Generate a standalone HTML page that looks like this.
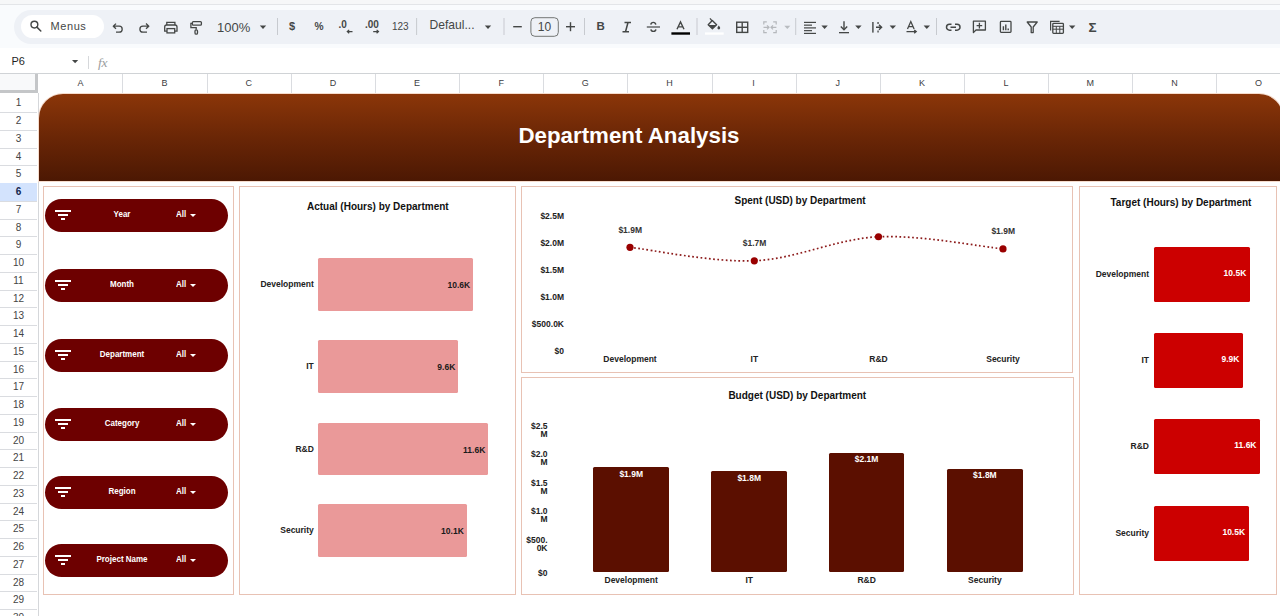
<!DOCTYPE html>
<html><head><meta charset="utf-8"><style>*{box-sizing:border-box;margin:0;padding:0}
html,body{width:1280px;height:616px;overflow:hidden;background:#fff;font-family:"Liberation Sans",sans-serif;position:relative}
.a{position:absolute}
#topstrip{left:0;top:0;width:1280px;height:5px;background:#f6f7f8;border-bottom:1px solid #e3e5e8}
#chrome{left:0;top:5px;width:1280px;height:43px;background:#f9fbfd}
#tb{left:14px;top:10px;width:1300px;height:34px;background:#eef1f6;border-radius:17px}
#search{left:21px;top:15px;width:83px;height:23px;background:#fff;border-radius:12px}
.tt{color:#444746;font-size:12px;white-space:nowrap;line-height:1.15}
svg.ic{position:absolute;overflow:visible}
#fbar{left:0;top:48px;width:1280px;height:25px;background:#fff}
.colL{text-align:center;font-size:9px;line-height:19px;color:#3c4043}
.rowL{text-align:center;font-size:10px;color:#444}
#banner{left:39px;top:94px;width:1244px;height:86.5px;border-radius:24px 24px 0 0;background:linear-gradient(#8b3609,#6a2606 50%,#4c1803);box-shadow:0 0 0 1px #f6dccd}
#title{left:39px;top:122.5px;width:1180px;text-align:center;color:#fff;font-weight:700;font-size:22.3px;line-height:26px}
.panel{position:absolute;background:#fff;border:1.6px solid #e8c2b4}
.slicer{position:absolute;left:45px;width:183.3px;height:33px;border-radius:17px;background:#6d0000}
.sl-t{position:absolute;top:-1.1px;transform:scaleY(1.12);left:0;width:154px;line-height:33px;text-align:center;color:#fff;font-weight:700;font-size:8px}
.sl-all{position:absolute;left:131px;top:-1.1px;transform:scaleY(1.12);line-height:33px;color:#fff;font-weight:700;font-size:8px}
.sl-arr{position:absolute;left:145px;top:15px;width:0;height:0;border-left:3px solid transparent;border-right:3px solid transparent;border-top:3px solid #fff}
.fl1{position:absolute;left:10px;top:10.5px;width:16px;height:2px;background:#fff}
.fl2{position:absolute;left:13px;top:14.8px;width:10px;height:2px;background:#fff}
.fl3{position:absolute;left:16px;top:19px;width:4px;height:2px;background:#fff}
.ctitle{position:absolute;font-weight:700;font-size:10px;line-height:12px;color:#111;white-space:nowrap}
.lbl{position:absolute;font-weight:700;font-size:8.5px;line-height:10px;color:#222;white-space:nowrap}
.bar1{background:#ea9999;border-radius:1.5px}
.bar2{background:#cc0000;border-radius:1.5px}
.bar3{background:#5b0f00;border-radius:1.5px}
</style></head><body>
<div class="a" id="topstrip"></div>
<div class="a" id="chrome"></div>
<div class="a" id="tb"></div>
<div class="a" id="search"></div>
<svg class="ic" style="left:0;top:0" width="1280" height="48" viewBox="0 0 1280 48"><circle cx="34.4" cy="24.6" r="3.4" fill="none" stroke="#444746" stroke-width="1.4"/><line x1="36.9" y1="27.1" x2="40.8" y2="31" stroke="#444746" stroke-width="1.5" stroke-linecap="round"/><path d="M116,23.6 L113.3,26.2 L116,28.8 M113.6,26.2 H119.2 A3,2.95 0 0 1 119.2,32.1 H116" fill="none" stroke="#444746" stroke-width="1.3" stroke-linejoin="round"/><path d="M146,23.6 L148.8,26.2 L146,28.8 M148.5,26.2 H142.9 A3,2.95 0 0 0 142.9,32.1 H147" fill="none" stroke="#444746" stroke-width="1.3" stroke-linejoin="round"/><path d="M166.8,25 V22.4 H174.9 V25" fill="none" stroke="#444746" stroke-width="1.3"/><path d="M167,31.2 H164.7 V27 Q164.7,25 166.7,25 H175 Q177,25 177,27 V31.2 H174.7" fill="none" stroke="#444746" stroke-width="1.3"/><rect x="167" y="28.6" width="7.7" height="4.3" fill="none" stroke="#444746" stroke-width="1.3"/><rect x="192.4" y="21.6" width="9" height="3.6" rx="1" fill="none" stroke="#444746" stroke-width="1.3"/><path d="M192.4,23.4 H190.9 V27.6 H196.2 V29.6" fill="none" stroke="#444746" stroke-width="1.3"/><rect x="195" y="29.8" width="2.5" height="4.4" rx="1.2" fill="none" stroke="#444746" stroke-width="1.3"/><path d="M259.8,25.6 H266.2 L263,29 Z" fill="#444746"/><path d="M484.8,25.6 H491.2 L488,29 Z" fill="#444746"/><path d="M821.4,25.6 H827.8000000000001 L824.6,29 Z" fill="#444746"/><path d="M855.1999999999999,25.6 H861.6 L858.4,29 Z" fill="#444746"/><path d="M889.5999999999999,25.6 H896.0 L892.8,29 Z" fill="#444746"/><path d="M923.5999999999999,25.6 H930.0 L926.8,29 Z" fill="#444746"/><path d="M1069.0,25.6 H1075.4 L1072.2,29 Z" fill="#444746"/><path d="M784.3,25.8 H790.3 L787.3,29 Z" fill="#b8bcc0"/><rect x="277.0" y="18" width="1" height="17" fill="#c7cacf"/><rect x="416.1" y="18" width="1" height="17" fill="#c7cacf"/><rect x="503.5" y="18" width="1" height="17" fill="#c7cacf"/><rect x="584.0" y="18" width="1" height="17" fill="#c7cacf"/><rect x="696.5" y="18" width="1" height="17" fill="#c7cacf"/><rect x="795.2" y="18" width="1" height="17" fill="#c7cacf"/><rect x="936.0" y="18" width="1" height="17" fill="#c7cacf"/><line x1="513.2" y1="26.7" x2="521.8" y2="26.7" stroke="#444746" stroke-width="1.4"/><line x1="566" y1="26.7" x2="575" y2="26.7" stroke="#444746" stroke-width="1.4"/><line x1="570.5" y1="22.2" x2="570.5" y2="31.2" stroke="#444746" stroke-width="1.4"/><rect x="530.9" y="17.7" width="27.4" height="18.6" rx="4" fill="none" stroke="#747775" stroke-width="1"/><path d="M624.5,22.5 H631 M622.5,31.7 H629 M628,22.5 L625.5,31.7" fill="none" stroke="#444746" stroke-width="1.5"/><line x1="646.8" y1="27" x2="660" y2="27" stroke="#444746" stroke-width="1.2"/><path d="M655.8,24.6 Q655.4,22.4 653.3,22.4 Q651.1,22.4 650.8,24.6" fill="none" stroke="#444746" stroke-width="1.4"/><path d="M650.9,29.4 Q651.2,31.4 653.4,31.4 Q655.6,31.4 655.9,29.4" fill="none" stroke="#444746" stroke-width="1.4"/><path d="M677,29.2 L680.5,21.9 L684,29.2 M678.1,26.9 H682.9" fill="none" stroke="#444746" stroke-width="1.4"/><rect x="671.4" y="32.3" width="18.6" height="2.4" fill="#000"/><path d="M710,18.4 L712,20.8" stroke="#444746" stroke-width="1.3"/><path d="M712.3,20.6 L716.6,24.7 L712.4,28.8 L708.2,24.7 Z" fill="none" stroke="#444746" stroke-width="1.4" stroke-linejoin="round"/><path d="M708.6,24.9 L716.2,24.9 L712.4,28.6 Z" fill="#444746"/><path d="M718.8,25.6 Q720.2,27.4 720.2,28 A1.4,1.4 0 0 1 717.4,28 Q717.4,27.4 718.8,25.6Z" fill="#444746"/><rect x="705" y="32.4" width="18.7" height="2.3" fill="#ffffff"/><rect x="736.7" y="22.2" width="11" height="10.2" fill="none" stroke="#444746" stroke-width="1.4"/><line x1="742.2" y1="22.2" x2="742.2" y2="32.4" stroke="#444746" stroke-width="1.4"/><line x1="736.7" y1="27.3" x2="747.7" y2="27.3" stroke="#444746" stroke-width="1.4"/><path d="M763.8,24.6 V21.9 H766.8 M763.8,30 V32.7 H766.8 M776.2,24.6 V21.9 H773.2 M776.2,30 V32.7 H773.2" fill="none" stroke="#b5b8bc" stroke-width="1.2"/><path d="M763.5,27.3 H768.8 M767,25.3 L769,27.3 L767,29.3 M776.4,27.3 H771.2 M773,25.3 L771,27.3 L773,29.3" fill="none" stroke="#b5b8bc" stroke-width="1.2"/><rect x="804" y="21.8" width="12" height="1.2" fill="#444746"/><rect x="804" y="24.55" width="8" height="1.2" fill="#444746"/><rect x="804" y="27.3" width="12" height="1.2" fill="#444746"/><rect x="804" y="30.05" width="8" height="1.2" fill="#444746"/><rect x="804" y="32.8" width="12" height="1.2" fill="#444746"/><line x1="844" y1="21.2" x2="844" y2="29.5" stroke="#444746" stroke-width="1.4"/><path d="M840.8,26.6 L844,29.8 L847.2,26.6" fill="none" stroke="#444746" stroke-width="1.4"/><rect x="839" y="32" width="10" height="1.3" fill="#444746"/><rect x="872.2" y="22" width="1.4" height="10.6" fill="#444746"/><path d="M876,27.3 H881.5 M879,24.8 L881.6,27.3 L879,29.8" fill="none" stroke="#444746" stroke-width="1.4"/><rect x="877.4" y="22" width="1.3" height="2" fill="#444746"/><rect x="877.4" y="30.5" width="1.3" height="2" fill="#444746"/><path d="M907.5,29 L910.8,21.6 L914.1,29 M908.6,26.6 H913" fill="none" stroke="#444746" stroke-width="1.3"/><path d="M906.5,31.6 H916 M914.2,30 L916.2,31.6 L914.2,33.2" fill="none" stroke="#444746" stroke-width="1.3"/><path d="M951.5,24.2 H949.5 A3,3 0 0 0 949.5,30.2 H951.5 M955,24.2 H957 A3,3 0 0 1 957,30.2 H955 M950.5,27.2 H956" fill="none" stroke="#444746" stroke-width="1.5"/><path d="M973.4,32.6 V21.2 H985.4 V30 H976 Z" fill="none" stroke="#444746" stroke-width="1.3" stroke-linejoin="round"/><path d="M979.4,22.8 V28.4 M976.6,25.6 H982.2" fill="none" stroke="#444746" stroke-width="1.3"/><rect x="1000.4" y="21.4" width="10.6" height="11" rx="0.8" fill="none" stroke="#444746" stroke-width="1.3"/><path d="M1003.4,26.2 V30.2 M1005.8,24.6 V30.2 M1008.2,28.6 V30.2" fill="none" stroke="#444746" stroke-width="1.4"/><path d="M1027.2,22 H1037.2 L1033.2,27 V32.6 H1031.2 V27 Z" fill="none" stroke="#444746" stroke-width="1.3" stroke-linejoin="round"/><path d="M1050.6,30.6 V21.4 H1059.6" fill="none" stroke="#444746" stroke-width="1.2"/><rect x="1052.8" y="23.4" width="10.6" height="10" rx="0.8" fill="none" stroke="#444746" stroke-width="1.3"/><path d="M1052.8,26.3 H1063.4 M1052.8,29.2 H1063.4 M1056.3,26.3 V33.4 M1059.8,26.3 V33.4" fill="none" stroke="#444746" stroke-width="1"/></svg><svg class="ic" style="left:0;top:0" width="1280" height="48" viewBox="0 0 1280 48"><path d="M352.5,31.6 H347.3 M349.2,29.9 L347.3,31.6 L349.2,33.3" fill="none" stroke="#444746" stroke-width="1.2"/><path d="M373.2,31.6 H378.5 M376.6,29.9 L378.5,31.6 L376.6,33.3" fill="none" stroke="#444746" stroke-width="1.2"/></svg><div class="a tt" style="left:50.6px;top:19.8px;font-size:11px;font-weight:400;color:#444746;letter-spacing:0.55px">Menus</div><div class="a tt" style="left:217px;top:21px;font-size:13px;font-weight:400;color:#444746;">100%</div><div class="a tt" style="left:289px;top:19.5px;font-size:11px;font-weight:700;color:#444746;">$</div><div class="a tt" style="left:314.6px;top:20.5px;font-size:10.2px;font-weight:700;color:#444746;">%</div><div class="a tt" style="left:392px;top:20.5px;font-size:10px;font-weight:400;color:#444746;">123</div><div class="a tt" style="left:429.5px;top:19.3px;font-size:12.1px;font-weight:400;color:#444746;">Defaul...</div><div class="a tt" style="left:537.8px;top:20.5px;font-size:12px;font-weight:400;color:#444746;">10</div><div class="a tt" style="left:596.5px;top:19.5px;font-size:11.5px;font-weight:700;color:#444746;">B</div><div class="a tt" style="left:1088.5px;top:20px;font-size:13.5px;font-weight:700;color:#444746;">&Sigma;</div><div class="a tt" style="left:338.4px;top:18.5px;font-size:10px;font-weight:700;color:#444746;">.0</div><div class="a tt" style="left:365px;top:18.5px;font-size:10px;font-weight:700;color:#444746;">.00</div>
<div class="a" id="fbar"></div>
<div class="a tt" style="left:11.5px;top:54.5px;font-size:11px;color:#1f1f1f">P6</div>
<svg class="ic" style="left:0;top:0" width="140" height="73"><path d="M72,60 H78.2 L75.1,63.3 Z" fill="#444746"/><rect x="88" y="56" width="1" height="13" fill="#d6d8db"/></svg>
<div class="a" style="left:98px;top:54.5px;font-family:'Liberation Serif',serif;font-style:italic;font-size:13.5px;color:#9a9da0;letter-spacing:-0.3px">fx</div>
<div class="a" style="left:0;top:73px;width:1280px;height:1px;background:#d0d3d6"></div><div class="a" style="left:0;top:74px;width:1280px;height:19px;background:#fff"></div><div class="a colL" style="left:60.43px;top:74px;width:40px">A</div><div class="a" style="left:122px;top:74px;width:1px;height:19px;background:#dadce0"></div><div class="a colL" style="left:144.57px;top:74px;width:40px">B</div><div class="a" style="left:207px;top:74px;width:1px;height:19px;background:#dadce0"></div><div class="a colL" style="left:228.73px;top:74px;width:40px">C</div><div class="a" style="left:291px;top:74px;width:1px;height:19px;background:#dadce0"></div><div class="a colL" style="left:312.88px;top:74px;width:40px">D</div><div class="a" style="left:375px;top:74px;width:1px;height:19px;background:#dadce0"></div><div class="a colL" style="left:397.03px;top:74px;width:40px">E</div><div class="a" style="left:459px;top:74px;width:1px;height:19px;background:#dadce0"></div><div class="a colL" style="left:481.18px;top:74px;width:40px">F</div><div class="a" style="left:543px;top:74px;width:1px;height:19px;background:#dadce0"></div><div class="a colL" style="left:565.33px;top:74px;width:40px">G</div><div class="a" style="left:627px;top:74px;width:1px;height:19px;background:#dadce0"></div><div class="a colL" style="left:649.48px;top:74px;width:40px">H</div><div class="a" style="left:712px;top:74px;width:1px;height:19px;background:#dadce0"></div><div class="a colL" style="left:733.63px;top:74px;width:40px">I</div><div class="a" style="left:796px;top:74px;width:1px;height:19px;background:#dadce0"></div><div class="a colL" style="left:817.78px;top:74px;width:40px">J</div><div class="a" style="left:880px;top:74px;width:1px;height:19px;background:#dadce0"></div><div class="a colL" style="left:901.93px;top:74px;width:40px">K</div><div class="a" style="left:964px;top:74px;width:1px;height:19px;background:#dadce0"></div><div class="a colL" style="left:986.08px;top:74px;width:40px">L</div><div class="a" style="left:1048px;top:74px;width:1px;height:19px;background:#dadce0"></div><div class="a colL" style="left:1070.23px;top:74px;width:40px">M</div><div class="a" style="left:1132px;top:74px;width:1px;height:19px;background:#dadce0"></div><div class="a colL" style="left:1154.38px;top:74px;width:40px">N</div><div class="a" style="left:1216px;top:74px;width:1px;height:19px;background:#dadce0"></div><div class="a colL" style="left:1238.53px;top:74px;width:40px">O</div><div class="a" style="left:0;top:74px;width:35px;height:16px;background:#f8f9fa"></div><div class="a" style="left:35px;top:74px;width:3px;height:19px;background:#c4c6c8"></div><div class="a" style="left:0;top:90px;width:38px;height:3px;background:#c4c6c8"></div><div class="a" style="left:37.5px;top:93px;width:1px;height:523px;background:#d5d7da"></div><div class="a rowL" style="left:0;top:94.30px;width:37px;height:17.75px;line-height:17.75px;color:#444;font-weight:400">1</div><div class="a" style="left:0;top:112px;width:37px;height:1px;background:#dadce0"></div><div class="a rowL" style="left:0;top:112.05px;width:37px;height:17.75px;line-height:17.75px;color:#444;font-weight:400">2</div><div class="a" style="left:0;top:130px;width:37px;height:1px;background:#dadce0"></div><div class="a rowL" style="left:0;top:129.80px;width:37px;height:17.75px;line-height:17.75px;color:#444;font-weight:400">3</div><div class="a" style="left:0;top:148px;width:37px;height:1px;background:#dadce0"></div><div class="a rowL" style="left:0;top:147.55px;width:37px;height:17.75px;line-height:17.75px;color:#444;font-weight:400">4</div><div class="a" style="left:0;top:165px;width:37px;height:1px;background:#dadce0"></div><div class="a rowL" style="left:0;top:165.30px;width:37px;height:17.75px;line-height:17.75px;color:#444;font-weight:400">5</div><div class="a" style="left:0;top:183px;width:37px;height:1px;background:#dadce0"></div><div class="a" style="left:0;top:183px;width:37px;height:18px;background:#d3e3fd"></div><div class="a rowL" style="left:0;top:183.05px;width:37px;height:17.75px;line-height:17.75px;color:#13264d;font-weight:700">6</div><div class="a" style="left:0;top:201px;width:37px;height:1px;background:#dadce0"></div><div class="a rowL" style="left:0;top:200.80px;width:37px;height:17.75px;line-height:17.75px;color:#444;font-weight:400">7</div><div class="a" style="left:0;top:219px;width:37px;height:1px;background:#dadce0"></div><div class="a rowL" style="left:0;top:218.55px;width:37px;height:17.75px;line-height:17.75px;color:#444;font-weight:400">8</div><div class="a" style="left:0;top:236px;width:37px;height:1px;background:#dadce0"></div><div class="a rowL" style="left:0;top:236.30px;width:37px;height:17.75px;line-height:17.75px;color:#444;font-weight:400">9</div><div class="a" style="left:0;top:254px;width:37px;height:1px;background:#dadce0"></div><div class="a rowL" style="left:0;top:254.05px;width:37px;height:17.75px;line-height:17.75px;color:#444;font-weight:400">10</div><div class="a" style="left:0;top:272px;width:37px;height:1px;background:#dadce0"></div><div class="a rowL" style="left:0;top:271.80px;width:37px;height:17.75px;line-height:17.75px;color:#444;font-weight:400">11</div><div class="a" style="left:0;top:290px;width:37px;height:1px;background:#dadce0"></div><div class="a rowL" style="left:0;top:289.55px;width:37px;height:17.75px;line-height:17.75px;color:#444;font-weight:400">12</div><div class="a" style="left:0;top:307px;width:37px;height:1px;background:#dadce0"></div><div class="a rowL" style="left:0;top:307.30px;width:37px;height:17.75px;line-height:17.75px;color:#444;font-weight:400">13</div><div class="a" style="left:0;top:325px;width:37px;height:1px;background:#dadce0"></div><div class="a rowL" style="left:0;top:325.05px;width:37px;height:17.75px;line-height:17.75px;color:#444;font-weight:400">14</div><div class="a" style="left:0;top:343px;width:37px;height:1px;background:#dadce0"></div><div class="a rowL" style="left:0;top:342.80px;width:37px;height:17.75px;line-height:17.75px;color:#444;font-weight:400">15</div><div class="a" style="left:0;top:361px;width:37px;height:1px;background:#dadce0"></div><div class="a rowL" style="left:0;top:360.55px;width:37px;height:17.75px;line-height:17.75px;color:#444;font-weight:400">16</div><div class="a" style="left:0;top:378px;width:37px;height:1px;background:#dadce0"></div><div class="a rowL" style="left:0;top:378.30px;width:37px;height:17.75px;line-height:17.75px;color:#444;font-weight:400">17</div><div class="a" style="left:0;top:396px;width:37px;height:1px;background:#dadce0"></div><div class="a rowL" style="left:0;top:396.05px;width:37px;height:17.75px;line-height:17.75px;color:#444;font-weight:400">18</div><div class="a" style="left:0;top:414px;width:37px;height:1px;background:#dadce0"></div><div class="a rowL" style="left:0;top:413.80px;width:37px;height:17.75px;line-height:17.75px;color:#444;font-weight:400">19</div><div class="a" style="left:0;top:432px;width:37px;height:1px;background:#dadce0"></div><div class="a rowL" style="left:0;top:431.55px;width:37px;height:17.75px;line-height:17.75px;color:#444;font-weight:400">20</div><div class="a" style="left:0;top:449px;width:37px;height:1px;background:#dadce0"></div><div class="a rowL" style="left:0;top:449.30px;width:37px;height:17.75px;line-height:17.75px;color:#444;font-weight:400">21</div><div class="a" style="left:0;top:467px;width:37px;height:1px;background:#dadce0"></div><div class="a rowL" style="left:0;top:467.05px;width:37px;height:17.75px;line-height:17.75px;color:#444;font-weight:400">22</div><div class="a" style="left:0;top:485px;width:37px;height:1px;background:#dadce0"></div><div class="a rowL" style="left:0;top:484.80px;width:37px;height:17.75px;line-height:17.75px;color:#444;font-weight:400">23</div><div class="a" style="left:0;top:503px;width:37px;height:1px;background:#dadce0"></div><div class="a rowL" style="left:0;top:502.55px;width:37px;height:17.75px;line-height:17.75px;color:#444;font-weight:400">24</div><div class="a" style="left:0;top:520px;width:37px;height:1px;background:#dadce0"></div><div class="a rowL" style="left:0;top:520.30px;width:37px;height:17.75px;line-height:17.75px;color:#444;font-weight:400">25</div><div class="a" style="left:0;top:538px;width:37px;height:1px;background:#dadce0"></div><div class="a rowL" style="left:0;top:538.05px;width:37px;height:17.75px;line-height:17.75px;color:#444;font-weight:400">26</div><div class="a" style="left:0;top:556px;width:37px;height:1px;background:#dadce0"></div><div class="a rowL" style="left:0;top:555.80px;width:37px;height:17.75px;line-height:17.75px;color:#444;font-weight:400">27</div><div class="a" style="left:0;top:574px;width:37px;height:1px;background:#dadce0"></div><div class="a rowL" style="left:0;top:573.55px;width:37px;height:17.75px;line-height:17.75px;color:#444;font-weight:400">28</div><div class="a" style="left:0;top:591px;width:37px;height:1px;background:#dadce0"></div><div class="a rowL" style="left:0;top:591.30px;width:37px;height:17.75px;line-height:17.75px;color:#444;font-weight:400">29</div><div class="a" style="left:0;top:609px;width:37px;height:1px;background:#dadce0"></div><div class="a rowL" style="left:0;top:609.05px;width:37px;height:17.75px;line-height:17.75px;color:#444;font-weight:400">30</div><div class="a" style="left:0;top:627px;width:37px;height:1px;background:#dadce0"></div>
<div class="a" id="banner"></div><div class="a" id="title">Department Analysis</div><div class="panel" style="left:43px;top:186px;width:190.5px;height:408.5px"></div><div class="panel" style="left:238.5px;top:185.5px;width:277.0px;height:409.0px"></div><div class="panel" style="left:520.5px;top:185.5px;width:552.0px;height:187.0px"></div><div class="panel" style="left:520.5px;top:376.5px;width:553.0px;height:218.0px"></div><div class="panel" style="left:1078.5px;top:185.5px;width:198.0px;height:409.0px"></div><div class="slicer" style="top:199px"><div class="fl1"></div><div class="fl2"></div><div class="fl3"></div><div class="sl-t">Year</div><div class="sl-all">All</div><div class="sl-arr"></div></div><div class="slicer" style="top:269px"><div class="fl1"></div><div class="fl2"></div><div class="fl3"></div><div class="sl-t">Month</div><div class="sl-all">All</div><div class="sl-arr"></div></div><div class="slicer" style="top:339px"><div class="fl1"></div><div class="fl2"></div><div class="fl3"></div><div class="sl-t">Department</div><div class="sl-all">All</div><div class="sl-arr"></div></div><div class="slicer" style="top:408.2px"><div class="fl1"></div><div class="fl2"></div><div class="fl3"></div><div class="sl-t">Category</div><div class="sl-all">All</div><div class="sl-arr"></div></div><div class="slicer" style="top:476.3px"><div class="fl1"></div><div class="fl2"></div><div class="fl3"></div><div class="sl-t">Region</div><div class="sl-all">All</div><div class="sl-arr"></div></div><div class="slicer" style="top:544px"><div class="fl1"></div><div class="fl2"></div><div class="fl3"></div><div class="sl-t">Project Name</div><div class="sl-all">All</div><div class="sl-arr"></div></div>
<div class="ctitle" style="left:307px;top:201px">Actual (Hours) by Department</div><div class="a bar1" style="left:318px;top:258px;width:155.2px;height:52.6px"></div><div class="lbl" style="left:200px;width:113.8px;text-align:right;top:279.1px">Development</div><div class="lbl" style="left:370.2px;width:100px;text-align:right;top:280.0px;color:#1a1a1a">10.6K</div><div class="a bar1" style="left:318px;top:340.3px;width:140.3px;height:52.6px"></div><div class="lbl" style="left:200px;width:113.8px;text-align:right;top:361.4px">IT</div><div class="lbl" style="left:355.3px;width:100px;text-align:right;top:362.3px;color:#1a1a1a">9.6K</div><div class="a bar1" style="left:318px;top:422.5px;width:170.3px;height:52.6px"></div><div class="lbl" style="left:200px;width:113.8px;text-align:right;top:443.6px">R&amp;D</div><div class="lbl" style="left:385.3px;width:100px;text-align:right;top:444.5px;color:#1a1a1a">11.6K</div><div class="a bar1" style="left:318px;top:504px;width:148.8px;height:52.6px"></div><div class="lbl" style="left:200px;width:113.8px;text-align:right;top:525.1px">Security</div><div class="lbl" style="left:363.8px;width:100px;text-align:right;top:526.0px;color:#1a1a1a">10.1K</div><div class="ctitle" style="left:1110.5px;top:197px">Target (Hours) by Department</div><div class="a bar2" style="left:1154px;top:247.1px;width:95.8px;height:55px"></div><div class="lbl" style="left:1040px;width:109px;text-align:right;top:268.9px">Development</div><div class="lbl" style="left:1146.3px;width:100px;text-align:right;top:268.4px;color:#fff">10.5K</div><div class="a bar2" style="left:1154px;top:332.9px;width:89.0px;height:55px"></div><div class="lbl" style="left:1040px;width:109px;text-align:right;top:354.7px">IT</div><div class="lbl" style="left:1139.5px;width:100px;text-align:right;top:354.2px;color:#fff">9.9K</div><div class="a bar2" style="left:1154px;top:419.1px;width:106.0px;height:55px"></div><div class="lbl" style="left:1040px;width:109px;text-align:right;top:440.9px">R&amp;D</div><div class="lbl" style="left:1156.5px;width:100px;text-align:right;top:440.4px;color:#fff">11.6K</div><div class="a bar2" style="left:1154px;top:506.1px;width:94.6px;height:55px"></div><div class="lbl" style="left:1040px;width:109px;text-align:right;top:527.9px">Security</div><div class="lbl" style="left:1145.1px;width:100px;text-align:right;top:527.4px;color:#fff">10.5K</div><div class="ctitle" style="left:734.5px;top:195px">Spent (USD) by Department</div><div class="lbl" style="left:464px;width:100px;text-align:right;top:210.6px">$2.5M</div><div class="lbl" style="left:464px;width:100px;text-align:right;top:237.7px">$2.0M</div><div class="lbl" style="left:464px;width:100px;text-align:right;top:264.8px">$1.5M</div><div class="lbl" style="left:464px;width:100px;text-align:right;top:292.0px">$1.0M</div><div class="lbl" style="left:464px;width:100px;text-align:right;top:319.1px">$500.0K</div><div class="lbl" style="left:464px;width:100px;text-align:right;top:346.2px">$0</div><div class="lbl" style="left:580px;width:100px;text-align:center;top:353.7px">Development</div><div class="lbl" style="left:704.3px;width:100px;text-align:center;top:353.7px">IT</div><div class="lbl" style="left:828.5px;width:100px;text-align:center;top:353.7px">R&amp;D</div><div class="lbl" style="left:953px;width:100px;text-align:center;top:353.7px">Security</div><div class="lbl" style="left:580.2px;width:100px;text-align:center;top:224.5px;color:#333">$1.9M</div><div class="lbl" style="left:704.5px;width:100px;text-align:center;top:238.0px;color:#333">$1.7M</div><div class="lbl" style="left:953.2px;width:100px;text-align:center;top:226.1px;color:#333">$1.9M</div><svg class="ic" style="left:0;top:0" width="1280" height="616" viewBox="0 0 1280 616"><path d="M630,247.3 C650.7,249.6 712.9,262.6 754.3,260.8 C795.7,259.0 837.0,238.7 878.5,236.75 C920.0,234.8 982.2,246.9 1003,248.9" fill="none" stroke="#8c1a1a" stroke-width="1.7" stroke-dasharray="1.7 2.5"/><circle cx="630" cy="247.3" r="3.6" fill="#990000"/><circle cx="754.3" cy="260.8" r="3.6" fill="#990000"/><circle cx="878.5" cy="236.75" r="3.6" fill="#990000"/><circle cx="1003" cy="248.9" r="3.6" fill="#990000"/></svg><div class="ctitle" style="left:728.4px;top:389.5px">Budget (USD) by Department</div><div class="lbl" style="left:447.5px;width:100px;text-align:right;top:421.5px;line-height:8.4px">$2.5<br>M</div><div class="lbl" style="left:447.5px;width:100px;text-align:right;top:450.0px;line-height:8.4px">$2.0<br>M</div><div class="lbl" style="left:447.5px;width:100px;text-align:right;top:478.5px;line-height:8.4px">$1.5<br>M</div><div class="lbl" style="left:447.5px;width:100px;text-align:right;top:507.0px;line-height:8.4px">$1.0<br>M</div><div class="lbl" style="left:447.5px;width:100px;text-align:right;top:535.5px;line-height:8.4px">$500.<br>0K</div><div class="lbl" style="left:447.5px;width:100px;text-align:right;top:567.6px">$0</div><div class="a bar3" style="left:593.2px;top:467.1px;width:76.1px;height:104.6px"></div><div class="lbl" style="left:581.2px;width:100px;text-align:center;top:468.7px;color:#fff">$1.9M</div><div class="lbl" style="left:581.2px;width:100px;text-align:center;top:575.2px">Development</div><div class="a bar3" style="left:711.2px;top:471.3px;width:75.9px;height:100.4px"></div><div class="lbl" style="left:699.2px;width:100px;text-align:center;top:472.9px;color:#fff">$1.8M</div><div class="lbl" style="left:699.2px;width:100px;text-align:center;top:575.2px">IT</div><div class="a bar3" style="left:828.8px;top:452.7px;width:75.7px;height:119.0px"></div><div class="lbl" style="left:816.6px;width:100px;text-align:center;top:454.3px;color:#fff">$2.1M</div><div class="lbl" style="left:816.6px;width:100px;text-align:center;top:575.2px">R&amp;D</div><div class="a bar3" style="left:947px;top:468.7px;width:75.7px;height:103.0px"></div><div class="lbl" style="left:934.9px;width:100px;text-align:center;top:470.3px;color:#fff">$1.8M</div><div class="lbl" style="left:934.9px;width:100px;text-align:center;top:575.2px">Security</div>
</body></html>
